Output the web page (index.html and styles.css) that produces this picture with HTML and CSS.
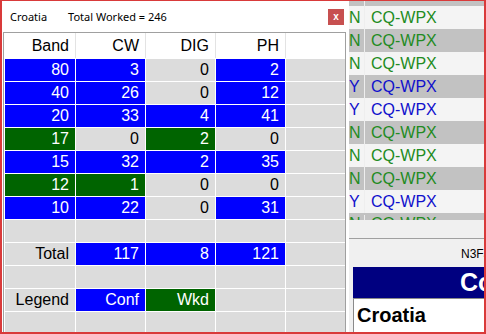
FILE: index.html
```html
<!DOCTYPE html>
<html>
<head>
<meta charset="utf-8">
<link rel="stylesheet" href="styles.css">
</head>
<body>
<div class="frame">
  <div class="popup">
    <div class="titlebar">
      <span class="title">Croatia</span>
      <span class="title total">Total Worked = 246</span>
      <span class="close">x</span>
    </div>
    <div class="grid">
      <div class="hd">Band</div><div class="hd">CW</div><div class="hd">DIG</div><div class="hd">PH</div><div class="hd last"></div>

      <div class="c b">80</div><div class="c b">3</div><div class="c n">0</div><div class="c b">2</div><div class="c n"></div>
      <div class="c b">40</div><div class="c b">26</div><div class="c n">0</div><div class="c b">12</div><div class="c n"></div>
      <div class="c b">20</div><div class="c b">33</div><div class="c b">4</div><div class="c b">41</div><div class="c n"></div>
      <div class="c g">17</div><div class="c n">0</div><div class="c g">2</div><div class="c n">0</div><div class="c n"></div>
      <div class="c b">15</div><div class="c b">32</div><div class="c b">2</div><div class="c b">35</div><div class="c n"></div>
      <div class="c g">12</div><div class="c g">1</div><div class="c n">0</div><div class="c n">0</div><div class="c n"></div>
      <div class="c b">10</div><div class="c b">22</div><div class="c n">0</div><div class="c b">31</div><div class="c n"></div>

      <div class="c n"></div><div class="c n"></div><div class="c n"></div><div class="c n"></div><div class="c n"></div>
      <div class="c n">Total</div><div class="c b">117</div><div class="c b">8</div><div class="c b">121</div><div class="c n"></div>
      <div class="c n"></div><div class="c n"></div><div class="c n"></div><div class="c n"></div><div class="c n"></div>
      <div class="c n">Legend</div><div class="c b">Conf</div><div class="c g">Wkd</div><div class="c n"></div><div class="c n"></div>
      <div class="c n"></div><div class="c n"></div><div class="c n"></div><div class="c n"></div><div class="c n"></div>
    </div>
  </div>

  <div class="app">
    <div class="list">
      <div class="row gray part"><span class="flag"></span><span class="contest"></span></div>
      <div class="row light grn"><span class="flag">N</span><span class="contest">CQ-WPX</span></div>
      <div class="row gray grn"><span class="flag">N</span><span class="contest">CQ-WPX</span></div>
      <div class="row light grn"><span class="flag">N</span><span class="contest">CQ-WPX</span></div>
      <div class="row gray blu"><span class="flag">Y</span><span class="contest">CQ-WPX</span></div>
      <div class="row light blu"><span class="flag">Y</span><span class="contest">CQ-WPX</span></div>
      <div class="row gray grn"><span class="flag">N</span><span class="contest">CQ-WPX</span></div>
      <div class="row light grn"><span class="flag">N</span><span class="contest">CQ-WPX</span></div>
      <div class="row gray grn"><span class="flag">N</span><span class="contest">CQ-WPX</span></div>
      <div class="row light blu"><span class="flag">Y</span><span class="contest">CQ-WPX</span></div>
      <div class="row gray grn cut"><span class="flag">N</span><span class="contest">CQ-WPX</span></div>
    </div>
    <div class="listfoot"></div>
    <div class="panel">
      <div class="brand">N3FJP Software</div>
      <div class="banner">Country</div>
      <div class="country">Croatia</div>
    </div>
  </div>
</div>
</body>
</html>
```

FILE: styles.css
```css
* { box-sizing: border-box; }

html, body {
  margin: 0;
  padding: 0;
  background: #ffffff;
}

.frame {
  width: 486px;
  height: 334px;
  border-style: solid;
  border-color: #d93a3a;
  border-width: 1px 2px 2px 2px;
  display: flex;
  overflow: hidden;
  background: #f0f0f0;
}

/* ---------- popup window ---------- */
.popup {
  width: 347px;
  flex: none;
  background: #ffffff;
  display: flex;
  flex-direction: column;
  overflow: hidden;
}

.titlebar {
  height: 31px;
  flex: none;
  display: flex;
  align-items: center;
  padding-left: 8px;
  padding-right: 5px;
  font-family: "Noto Sans", "Open Sans", sans-serif;
  font-size: 11px;
  color: #000000;
}

.title.total { margin-left: 21px; }

.close {
  margin-left: auto;
  width: 16px;
  height: 16px;
  background: #c75050;
  color: #ffffff;
  font-family: "Liberation Sans", sans-serif;
  font-weight: bold;
  font-size: 10px;
  line-height: 15px;
  text-align: center;
}

.grid {
  margin-left: 1px;
  width: 343px;
  flex: none;
  border: 1px solid #a0a0a0;
  border-bottom: none;
  padding-left: 1px;
  background: #ffffff;
  display: grid;
  grid-template-columns: 70px 69px 69px 69px 1fr;
  grid-template-rows: 25px;
  grid-auto-rows: 22px;
  gap: 1px;
  font-family: "Liberation Sans", Arial, sans-serif;
  font-size: 16px;
}

.hd, .c {
  display: flex;
  align-items: center;
  justify-content: flex-end;
  padding-right: 6px;
  white-space: nowrap;
}

.hd {
  background: #ffffff;
  color: #000000;
  box-shadow: 1px 0 0 #e3e3e3;
}
.hd.last { box-shadow: none; }

.c.b { background: #0000ff; color: #ffffff; }
.c.g { background: #006400; color: #ffffff; }
.c.n { background: #dcdcdc; color: #000000; }

/* ---------- background application ---------- */
.app {
  flex: 1;
  min-width: 0;
  display: flex;
  flex-direction: column;
  overflow: hidden;
}

.list {
  height: 219px;
  flex: none;
  overflow: hidden;
  font-family: "Liberation Sans", Arial, sans-serif;
  font-size: 16px;
}

.row {
  height: 23px;
  display: flex;
  align-items: center;
  overflow: hidden;
  white-space: nowrap;
}
.row.part { height: 5px; }
.row.cut { height: 7px; align-items: flex-start; padding-top: 2px; }

.row.light { background: #f4f4f4; }
.row.gray { background: #c2c2c2; }
.row.grn { color: #228b22; }
.row.blu { color: #1010cc; }

.flag {
  width: 15px;
  flex: none;
  height: 100%;
  display: flex;
  align-items: center;
  justify-content: flex-start;
  padding-left: 0;
}
.row.cut .flag { align-items: flex-start; }

.contest {
  flex: 1;
  height: 100%;
  display: flex;
  align-items: center;
  border-left: 1px solid #eeeeee;
  padding-left: 6px;
}
.row.cut .contest { align-items: flex-start; }

.listfoot {
  height: 18px;
  flex: none;
  background: #f0f0f0;
}

.panel {
  flex: 1;
  border-top: 1px solid #a0a0a0;
  background: #f0f0f0;
  display: flex;
  flex-direction: column;
  padding-left: 4px;
}

.brand {
  height: 28px;
  flex: none;
  display: flex;
  align-items: center;
  padding-left: 108px;
  padding-top: 2px;
  font-family: "Liberation Sans", Arial, sans-serif;
  font-size: 12px;
  color: #000000;
  white-space: nowrap;
  overflow: hidden;
}

.banner {
  height: 31px;
  flex: none;
  background: #000080;
  color: #ffffff;
  font-family: "Liberation Sans", Arial, sans-serif;
  font-weight: bold;
  font-size: 25px;
  display: flex;
  align-items: center;
  padding-left: 107px;
  white-space: nowrap;
  overflow: hidden;
}

.country {
  flex: 1;
  background: #ffffff;
  border-left: 1px solid #8a8a8a;
  border-top: 1px solid #8a8a8a;
  font-family: "Liberation Sans", Arial, sans-serif;
  font-weight: bold;
  font-size: 20px;
  color: #000000;
  padding-left: 3px;
  padding-top: 5px;
  white-space: nowrap;
  overflow: hidden;
}
```
